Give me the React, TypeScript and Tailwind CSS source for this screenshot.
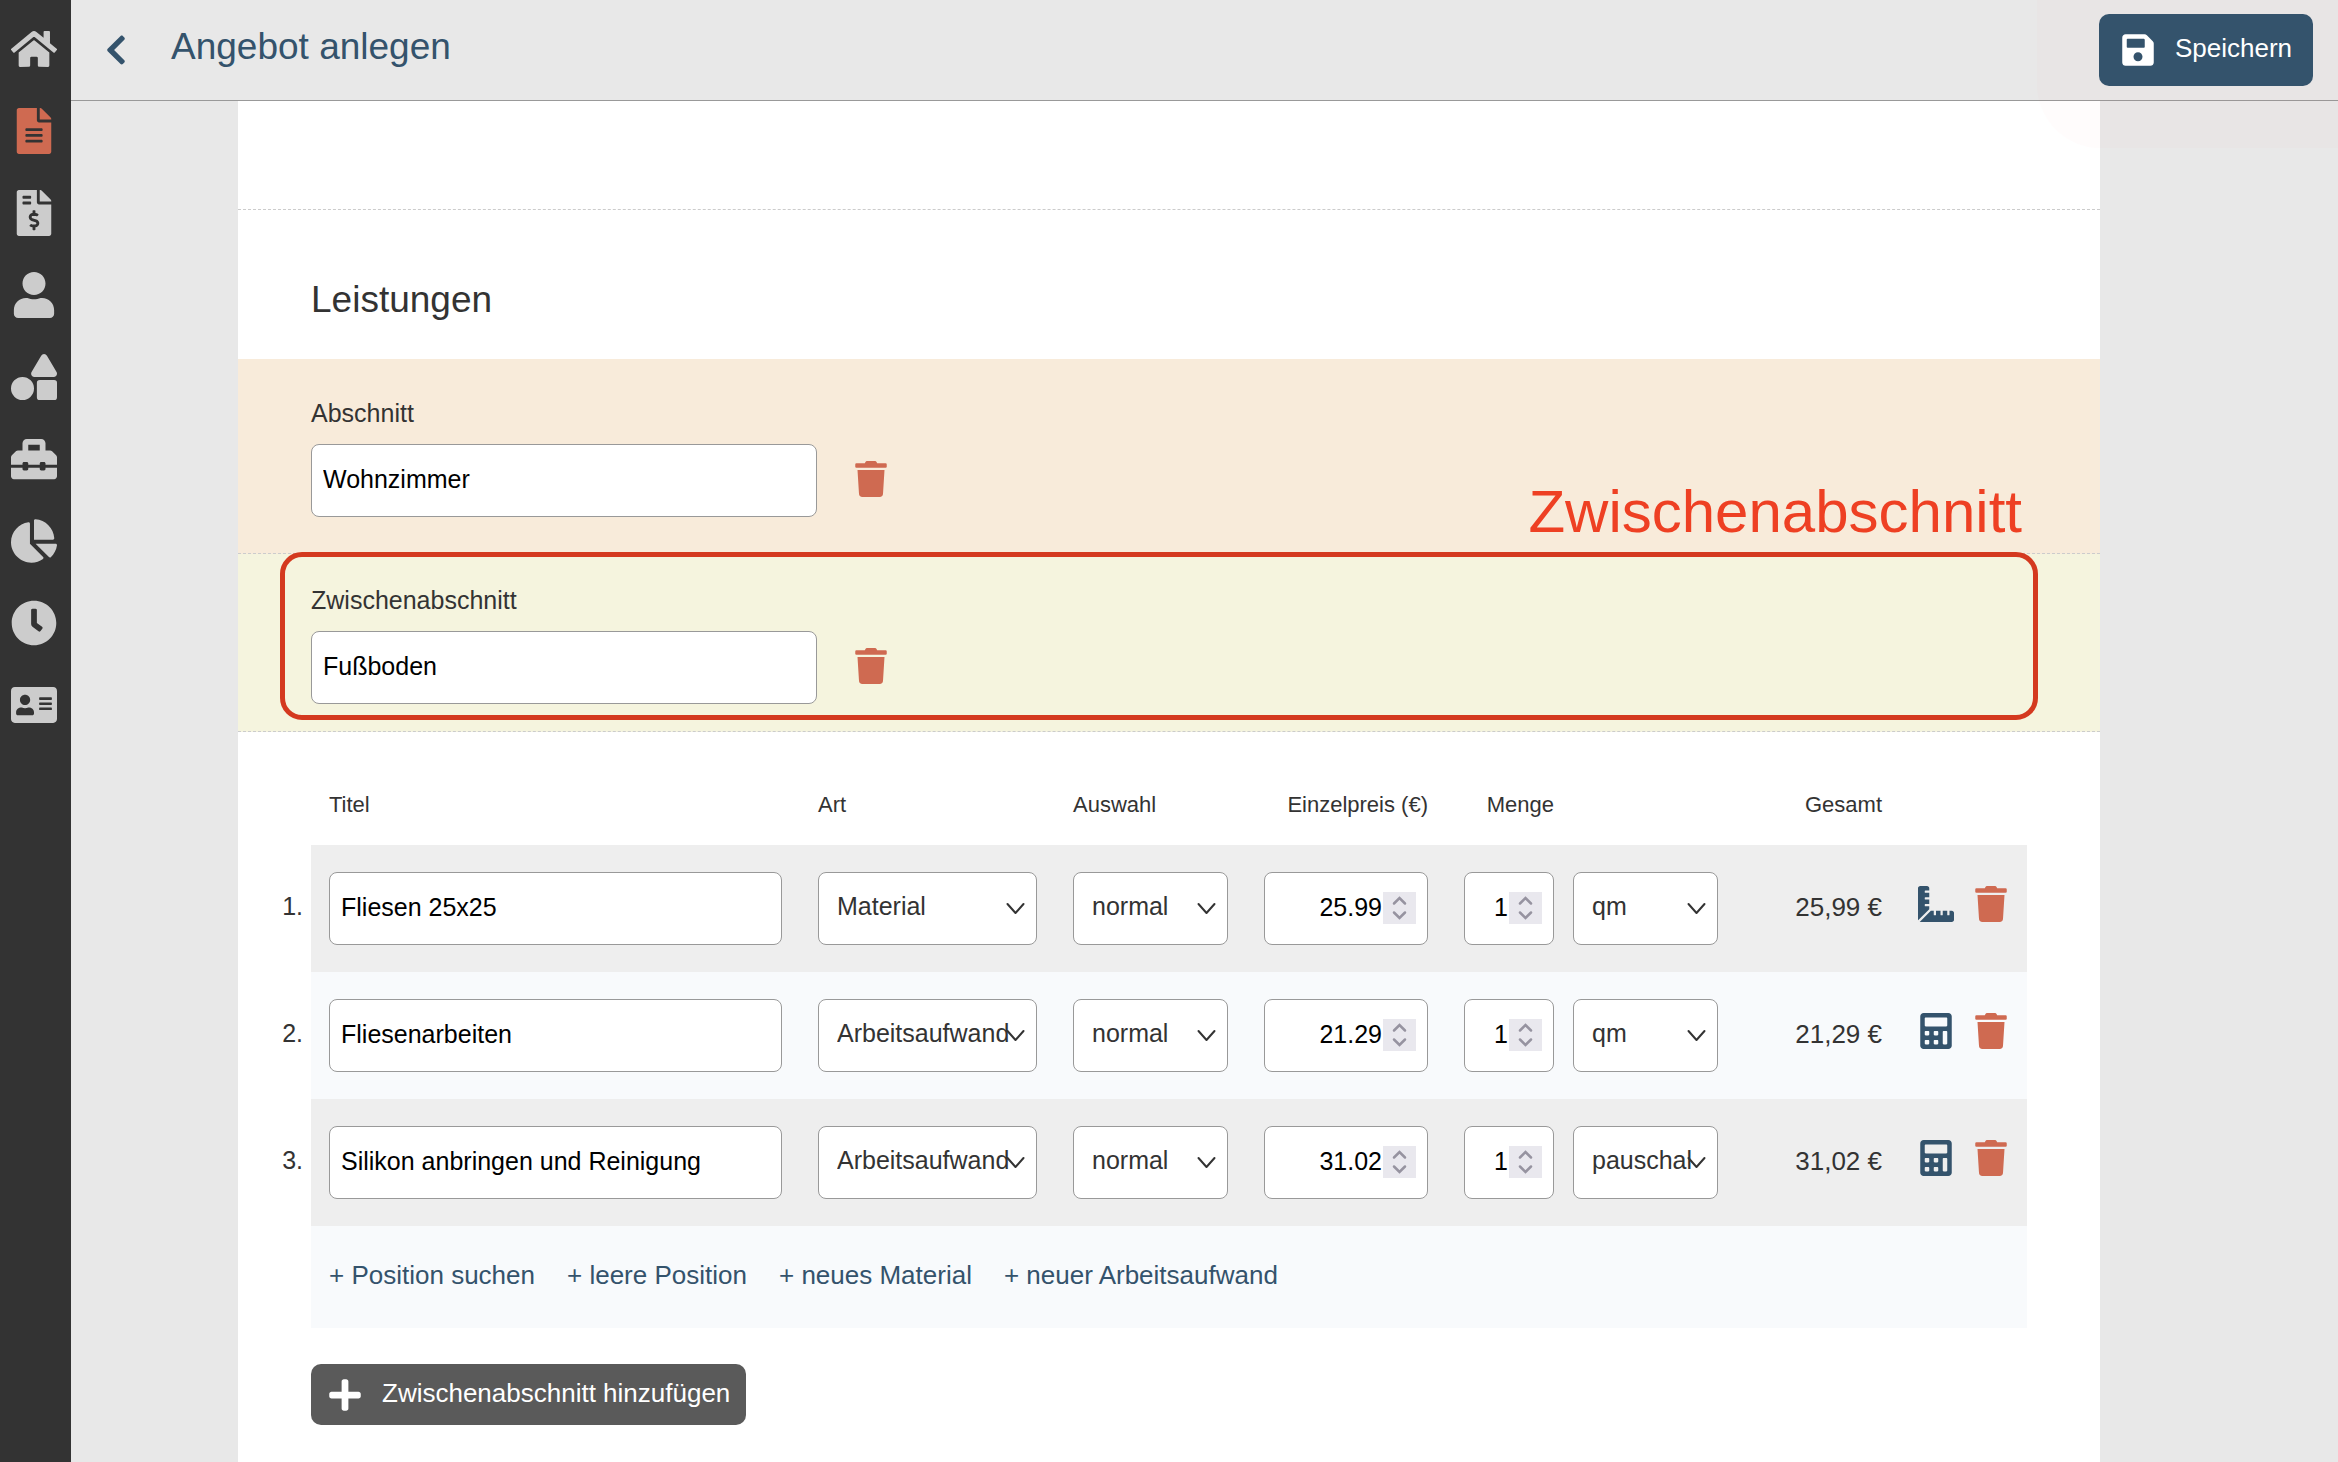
import type { ReactNode } from "react";
import {
  FaAddressCard,
  FaCalculator,
  FaChartPie,
  FaChevronLeft,
  FaClock,
  FaFileAlt,
  FaFileInvoiceDollar,
  FaHome,
  FaPlus,
  FaRulerCombined,
  FaSave,
  FaShapes,
  FaToolbox,
  FaTrash,
  FaUser,
} from "react-icons/fa";

const navItems = [
  { label: "Start", icon: FaHome },
  { label: "Angebote", icon: FaFileAlt, active: true },
  { label: "Rechnungen", icon: FaFileInvoiceDollar },
  { label: "Kunden", icon: FaUser },
  { label: "Material", icon: FaShapes },
  { label: "Arbeitsaufwand", icon: FaToolbox },
  { label: "Auswertung", icon: FaChartPie },
  { label: "Zeiten", icon: FaClock },
  { label: "Kontakte", icon: FaAddressCard },
];

const positions = [
  { title: "Fliesen 25x25", kind: "Material", price: "25.99", unit: "qm", total: "25,99 €" },
  { title: "Fliesenarbeiten", kind: "Arbeitsaufwand", price: "21.29", unit: "qm", total: "21,29 €" },
  { title: "Silikon anbringen und Reinigung", kind: "Arbeitsaufwand", price: "31.02", unit: "pauschal", total: "31,02 €" },
];

const addLinks = ["Position suchen", "leere Position", "neues Material", "neuer Arbeitsaufwand"];

const fieldClass = "block h-[73px] w-full rounded-lg border border-[#999] bg-white pb-[3px]";

function Sidebar() {
  return (
    <nav className="flex w-[71px] shrink-0 flex-col items-center gap-9 bg-[#333] pt-[26px] pr-[3px]">
      {navItems.map(({ label, icon: Icon, active }) => (
        <a key={label} href="#" aria-label={label} className={active ? "text-[#cf6a51]" : "text-[#ccc]"}>
          <Icon size={46} />
        </a>
      ))}
    </nav>
  );
}

function TrashButton() {
  return (
    <button aria-label="Löschen" className="text-[#cf6a51]">
      <FaTrash size={36} />
    </button>
  );
}

function TextInput({ id, label, value }: { id?: string; label?: string; value: string }) {
  return <input id={id} aria-label={label} type="text" defaultValue={value} className={`${fieldClass} px-[11px] text-black`} />;
}

function Select({ label, value }: { label: string; value: string }) {
  return (
    <div className="relative">
      <select aria-label={label} defaultValue={value} className={`${fieldClass} appearance-none pl-[18px]`}>
        <option>{value}</option>
      </select>
      <svg
        className="pointer-events-none absolute top-[30px] right-[11px]"
        width="21"
        height="14"
        viewBox="0 0 21 14"
        fill="none"
        stroke="#333"
        strokeWidth="2"
        strokeLinecap="round"
        strokeLinejoin="round"
      >
        <path d="M2.500 2l8 9 8-9" />
      </svg>
    </div>
  );
}

function NumberInput({ label, value }: { label: string; value: string }) {
  return (
    <div className="relative">
      <input
        aria-label={label}
        type="number"
        step="any"
        defaultValue={value}
        className={`${fieldClass} pr-[45px] text-right text-black [appearance:textfield] [&::-webkit-inner-spin-button]:appearance-none`}
      />
      <svg
        className="pointer-events-none absolute top-5 right-3 bg-[#e9e8ee]"
        width="33"
        height="32"
        viewBox="0 0 33 32"
        fill="none"
        stroke="#9693a0"
        strokeWidth="2.500"
        strokeLinecap="round"
      >
        <path d="M11 11.500l5.500-5.500 5.500 5.500M11 20.500l5.500 5.500 5.500-5.500" />
      </svg>
    </div>
  );
}

function Section({ id, label, value, className, children }: { id: string; label: string; value: string; className: string; children: ReactNode }) {
  return (
    <section className={`relative border-b border-dashed border-[#ccc] px-[73px] ${className}`}>
      <label htmlFor={id} className="block leading-9">
        {label}
      </label>
      <div className="mt-[13px] flex items-center gap-9">
        <div className="w-[506px]">
          <TextInput id={id} value={value} />
        </div>
        <div className="flex pb-1">
          <TrashButton />
        </div>
      </div>
      {children}
    </section>
  );
}

function PositionTable() {
  return (
    <div className="pr-[73px]">
      <table className="w-full table-fixed">
        <colgroup>
          <col className="w-[73px]" />
          <col />
          <col className="w-[255px]" />
          <col className="w-[191px]" />
          <col className="w-[200px]" />
          <col className="w-[118px]" />
          <col className="w-[172px]" />
          <col className="w-[164px]" />
          <col className="w-[127px]" />
        </colgroup>
        <thead>
          <tr className="h-[113px] text-left text-[22px] [&>th]:px-[18px] [&>th]:pt-8 [&>th]:font-normal">
            <td />
            <th>Titel</th>
            <th>Art</th>
            <th>Auswahl</th>
            <th className="text-right whitespace-nowrap">Einzelpreis (€)</th>
            <th>
              <div className="-mr-2 text-right">Menge</div>
            </th>
            <td />
            <th className="text-right">Gesamt</th>
            <td />
          </tr>
        </thead>
        <tbody>
          {positions.map((pos, i) => {
            const bg = i % 2 ? "bg-[#f8fafc]" : "bg-[#eee]";
            return (
              <tr key={pos.title} className="h-[127px]">
                <td className="pr-2 pb-[3px] text-right">{i + 1}.</td>
                <td className={`px-[18px] ${bg}`}>
                  <TextInput label="Titel" value={pos.title} />
                </td>
                <td className={`px-[18px] ${bg}`}>
                  <Select label="Art" value={pos.kind} />
                </td>
                <td className={`px-[18px] ${bg}`}>
                  <Select label="Auswahl" value="normal" />
                </td>
                <td className={`px-[18px] ${bg}`}>
                  <NumberInput label="Einzelpreis" value={pos.price} />
                </td>
                <td className={`pr-[10px] pl-[18px] ${bg}`}>
                  <NumberInput label="Menge" value="1" />
                </td>
                <td className={`pr-[18px] pl-[9px] ${bg}`}>
                  <Select label="Einheit" value={pos.unit} />
                </td>
                <td className={`px-[18px] pb-[3px] text-right text-[26px] ${bg}`}>{pos.total}</td>
                <td className={`px-[18px] pb-[10px] ${bg}`}>
                  <div className="flex justify-between">
                    <button aria-label="Berechnen" className="text-[#34536c]">
                      {pos.kind === "Material" ? <FaRulerCombined size={36} /> : <FaCalculator size={36} />}
                    </button>
                    <TrashButton />
                  </div>
                </td>
              </tr>
            );
          })}
        </tbody>
        <tfoot>
          <tr className="h-[102px]">
            <td />
            <td colSpan={8} className="bg-[#f8fafc] px-[18px] pb-[3px]">
              <div className="flex gap-8 text-[26px] text-[#34536c]">
                {addLinks.map((text) => (
                  <a key={text} href="#">
                    + {text}
                  </a>
                ))}
              </div>
            </td>
          </tr>
        </tfoot>
      </table>
    </div>
  );
}

export default function App() {
  return (
    <div className="flex min-h-screen bg-[#e8e8e8] font-['Liberation_Sans',Arial,sans-serif] text-[25px] text-[#333]">
      <Sidebar />
      <div className="relative flex flex-1 flex-col">
        {/* faint glow around the save button */}
        <div className="pointer-events-none absolute top-0 right-0 h-[148px] w-[301px] rounded-bl-[64px] bg-[#ff0000]/1" />
        <header className="flex h-[101px] items-center border-b border-[#999] pr-[25px] pl-7 text-[#34536c]">
          <button aria-label="Zurück">
            <FaChevronLeft size={34} />
          </button>
          <h1 className="ml-[38px] flex-1 pb-[6px] text-[37px]">Angebot anlegen</h1>
          <button className="relative flex h-[72px] items-center gap-[19px] rounded-[10px] bg-[#34536c] px-[21px] text-[26px] text-white">
            <FaSave size={36} />
            <span className="pb-[3px]">Speichern</span>
          </button>
        </header>

        <main className="mr-[238px] ml-[167px] flex-1 bg-white pb-9">
          <div className="h-[109px] border-b border-dashed border-[#ccc]" />
          <h2 className="px-[73px] pt-[68px] pb-[37px] text-[37px] leading-[44px]">Leistungen</h2>
          <Section id="abschnitt" label="Abschnitt" value="Wohnzimmer" className="bg-[#f8ebda] py-9">
            <div className="absolute right-[78px] bottom-[11px] text-[60px] leading-[60px] text-[#ee4023]">Zwischenabschnitt</div>
          </Section>
          <Section id="zwischenabschnitt" label="Zwischenabschnitt" value="Fußboden" className="bg-[#f5f4de] pt-7 pb-[27px]">
            <div className="pointer-events-none absolute -top-[2px] right-[62px] bottom-[11px] left-[42px] rounded-[22px] border-5 border-[#d4391f]" />
          </Section>
          <PositionTable />
          <button className="mt-9 ml-[73px] flex h-[61px] items-center gap-[19px] rounded-[10px] bg-[#5a5a5a] px-4 text-[26px] text-white">
            <FaPlus size={36} />
            <span className="pb-[3px]">Zwischenabschnitt hinzufügen</span>
          </button>
        </main>
      </div>
    </div>
  );
}
